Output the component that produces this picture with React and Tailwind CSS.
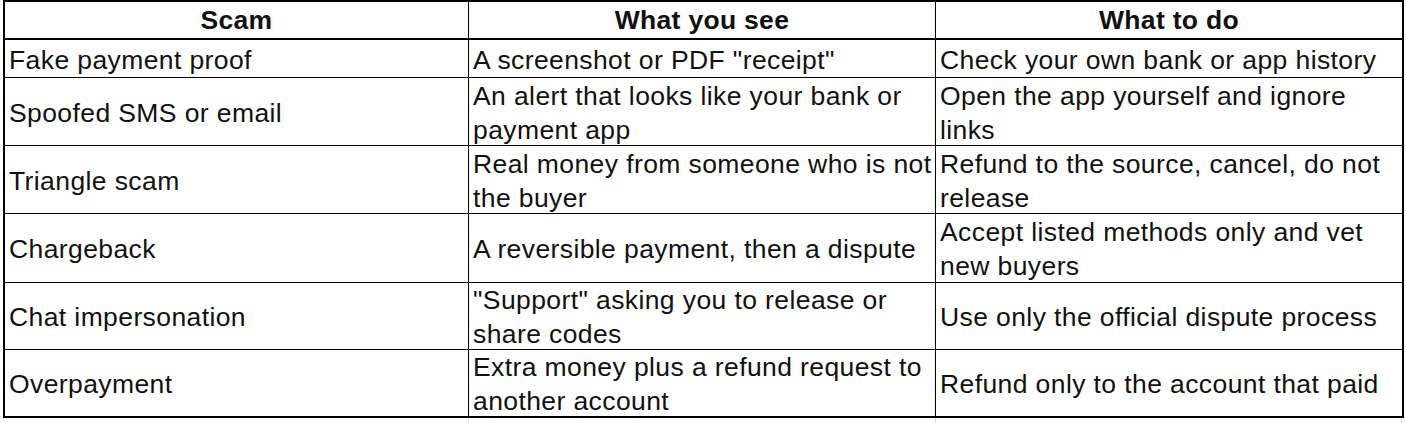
import React from "react";

const rows = [
  ["Fake payment proof", 'A screenshot or PDF "receipt"', "Check your own bank or app history", "h-[38px]"],
  ["Spoofed SMS or email", "An alert that looks like your bank or payment app", "Open the app yourself and ignore links", "h-[68px]"],
  ["Triangle scam", "Real money from someone who is not the buyer", "Refund to the source, cancel, do not release", "h-[68px]"],
  ["Chargeback", "A reversible payment, then a dispute", "Accept listed methods only and vet new buyers", "h-[69px]"],
  ["Chat impersonation", '"Support" asking you to release or share codes', "Use only the official dispute process", "h-[67px]"],
  ["Overpayment", "Extra money plus a refund request to another account", "Refund only to the account that paid", "h-[66px]"],
];

export default function App() {
  return (
    <div
      className="w-[1406px] h-[423px] bg-white overflow-hidden text-[#111]"
      style={{ fontFamily: '"Liberation Sans", Arial, sans-serif' }}
    >
      <div className="pl-[3px]">
        <div className="w-[1401px] border-2 border-black grid grid-cols-[464px_467px_466px]">
          {["Scam", "What you see", "What to do"].map((h, i) => (
            <div
              key={h}
              className={`h-[38px] border-b-2 border-black flex items-center justify-center font-bold text-[26.5px] leading-[30px] tracking-[0.3px] ${i < 2 ? "border-r" : ""}`}
            >
              {h}
            </div>
          ))}
          {rows.map((r, ri) => (
            <React.Fragment key={ri}>
              {[r[0], r[1], r[2]].map((c, ci) => (
                <div
                  key={ci}
                  className={`${r[3]} ${ri < rows.length - 1 ? "border-b" : ""} ${ci < 2 ? "border-r" : ""} border-black flex items-center pt-[2px] pl-[4px] pr-[1px] text-[26.5px] leading-[34px] tracking-[0.4px]`}
                >
                  {c}
                </div>
              ))}
            </React.Fragment>
          ))}
        </div>
        <div className="h-[6px] grid grid-cols-[466px_467px_466px] w-[1401px]">
          <div className="border-r border-[#d9d9d9]" />
          <div className="border-r border-[#d9d9d9]" />
          <div className="border-r border-[#d9d9d9]" />
        </div>
      </div>
    </div>
  );
}
